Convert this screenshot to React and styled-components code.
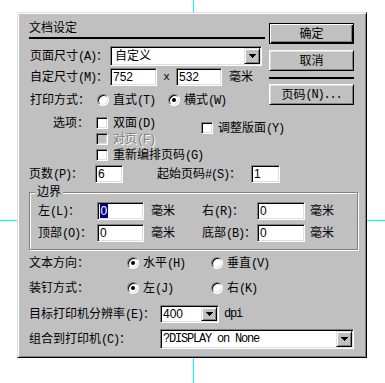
import React from "react";
import styled, { createGlobalStyle } from "styled-components";

const Global = createGlobalStyle`
  html, body { margin: 0; padding: 0; background: #fff; }
  body {
    font-family: "Liberation Sans", "Noto Sans CJK SC", sans-serif;
    font-size: 12px;
    color: #000;
  }
  * { box-sizing: border-box; }
`;

const Page = styled.div`
  position: relative;
  width: 385px;
  height: 383px;
  overflow: hidden;
  padding: 12px 0 0 17px;
`;

const GuideV = styled.div`
  position: absolute;
  left: 193px;
  top: 0;
  bottom: 0;
  width: 1px;
  background: #00ffff;
`;

const GuideH = styled.div`
  position: absolute;
  top: 220px;
  left: 0;
  right: 0;
  height: 1px;
  background: #00ffff;
`;

const Dialog = styled.div`
  position: relative;
  width: 350px;
  height: 346px;
  background: #c0c0c0;
  border: 1px solid;
  border-color: #dfdfdf #000 #000 #dfdfdf;
  box-shadow: inset 1px 1px #fff, inset -1px -1px #808080;
  padding: 8px 12px 0 11px;
  display: flex;
  flex-direction: column;
`;

const Top = styled.div`
  display: flex;
  gap: 4px;
`;

const LeftCol = styled.div`
  width: 236px;
  display: flex;
  flex-direction: column;
`;

const RightCol = styled.div`
  width: 85px;
  display: flex;
  flex-direction: column;
  padding-top: 2px;
`;

const Title = styled.div`
  line-height: 14px;
  padding: 0 0 2px;
  border-bottom: 2px solid #000;
`;

const Row = styled.div`
  display: flex;
  align-items: center;
  height: ${(p) => p.$h || 18}px;
  margin-top: ${(p) => p.$mt || 0}px;
  white-space: nowrap;
`;

const Label = styled.div`
  flex-shrink: 0;
  width: ${(p) => p.$w}px;
  padding-left: ${(p) => p.$pl || 0}px;
  margin-left: ${(p) => p.$ml || 0}px;
  line-height: 14px;
  white-space: nowrap;
`;

/* accelerator / ascii part, rendered in a narrow monospace like the bitmap font */
const Key = styled.span`
  font-family: "Liberation Mono", monospace;
  font-size: 12px;
  letter-spacing: -1.2px;
`;

const Unit = styled.div`
  flex-shrink: 0;
  width: ${(p) => (p.$w ? `${p.$w}px` : "auto")};
  padding-left: ${(p) => p.$pl || 0}px;
  line-height: 14px;
`;

const MonoUnit = styled.div`
  margin-left: 5px;
  font-family: "Liberation Mono", monospace;
  font-size: 12px;
  letter-spacing: -1.2px;
`;

const Times = styled.div`
  width: 19px;
  text-align: center;
  font-family: "Liberation Mono", monospace;
  font-size: 11px;
  line-height: 14px;
`;

const sunken = `
  border: 1px solid;
  border-color: #808080 #fff #fff #808080;
  box-shadow: inset 1px 1px #000, inset -1px -1px #dfdfdf;
`;

const raised = `
  border: 1px solid;
  border-color: #dfdfdf #000 #000 #dfdfdf;
  box-shadow: inset 1px 1px #fff, inset -1px -1px #808080;
`;

const Field = styled.div`
  flex-shrink: 0;
  width: ${(p) => p.$w}px;
  height: ${(p) => p.$h || 18}px;
  background: #fff;
  ${sunken}
  padding-left: 2px;
  display: flex;
  align-items: center;
  font-family: "Liberation Sans", sans-serif;
  font-size: 12px;
  line-height: 14px;
`;

const Selected = styled.span`
  background: #000080;
  color: #fff;
  line-height: 14px;
  padding: 0 0.5px;
`;

const Combo = styled.div`
  flex-shrink: 0;
  width: ${(p) => p.$w}px;
  height: ${(p) => p.$h}px;
  background: #fff;
  ${sunken}
  padding: 1px;
  display: flex;
  align-items: center;
`;

const ComboText = styled.div`
  flex: 1;
  padding-left: ${(p) => p.$pl ?? 3}px;
  line-height: 14px;
  white-space: nowrap;
  overflow: hidden;
  font-family: ${(p) =>
    p.$mono ? '"Liberation Mono", monospace' : '"Liberation Sans", "Noto Sans CJK SC", sans-serif'};
  font-size: 12px;
  letter-spacing: ${(p) => (p.$mono ? "-1.2px" : "0")};
`;

const DropBtn = styled.div`
  width: 16px;
  align-self: stretch;
  background: #c0c0c0;
  ${raised}
  display: flex;
  align-items: center;
  justify-content: center;
`;

const Arrow = () => (
  <svg width="7" height="4" viewBox="0 0 7 4" shapeRendering="crispEdges">
    <rect x="0" y="0" width="7" height="1" fill="#000" />
    <rect x="1" y="1" width="5" height="1" fill="#000" />
    <rect x="2" y="2" width="3" height="1" fill="#000" />
    <rect x="3" y="3" width="1" height="1" fill="#000" />
  </svg>
);

const Radio = styled.span`
  flex-shrink: 0;
  width: 12px;
  height: 12px;
  border-radius: 50%;
  background: #fff;
  ${sunken}
  display: flex;
  align-items: center;
  justify-content: center;
  &::after {
    content: "";
    width: 4px;
    height: 4px;
    border-radius: 50%;
    background: #000;
    display: ${(p) => (p.$on ? "block" : "none")};
  }
`;

const Choice = styled.div`
  flex-shrink: 0;
  display: flex;
  align-items: center;
  gap: ${(p) => p.$gap || 4}px;
  width: ${(p) => (p.$w ? `${p.$w}px` : "auto")};
  line-height: 14px;
  white-space: nowrap;
  color: ${(p) => (p.$disabled ? "#808080" : "#000")};
  text-shadow: ${(p) => (p.$disabled ? "1px 1px 0 #fff" : "none")};
`;

const Box = styled.span`
  flex-shrink: 0;
  width: 12px;
  height: 12px;
  background: ${(p) => (p.$disabled ? "#c0c0c0" : "#fff")};
  ${sunken}
`;

const Options = styled.div`
  display: grid;
  grid-template-columns: 67px 105px auto;
  grid-template-rows: 16px 16px 16px;
  margin-top: 7px;
`;

const OptLabel = styled.div`
  grid-column: 1;
  grid-row: 1;
  padding-left: 24px;
  line-height: 16px;
`;

const OptCell = styled.div`
  grid-column: ${(p) => p.$col};
  grid-row: ${(p) => p.$row};
  align-self: ${(p) => (p.$top ? "start" : "center")};
  margin-top: ${(p) => p.$mt || 0}px;
  display: flex;
  align-items: center;
  height: 16px;
`;

const Btn = styled.div`
  height: 21px;
  margin-top: ${(p) => p.$mt || 0}px;
  background: #c0c0c0;
  display: flex;
  align-items: center;
  justify-content: center;
  line-height: 14px;
  white-space: nowrap;
  border: 1px solid;
  border-color: ${(p) => (p.$def ? "#000" : "#fff #000 #000 #fff")};
  box-shadow: ${(p) =>
    p.$def
      ? "inset 1px 1px #fff, inset -1px -1px #000, inset -2px -2px #808080"
      : "inset 1px 1px #dfdfdf, inset -1px -1px #808080"};
`;

const Sep = styled.div`
  height: 2px;
  margin-top: 6px;
  background: #000;
`;

const Group = styled.div`
  position: relative;
  width: 329px;
  margin-top: 9px;
  padding: 9px 0 7px 8px;
  border: 1px solid #808080;
  box-shadow: inset 1px 1px #fff, 1px 1px #fff;
  display: flex;
  flex-direction: column;
`;

const Legend = styled.span`
  position: absolute;
  top: -8px;
  left: 5px;
  padding: 0 2px;
  line-height: 14px;
  background: #c0c0c0;
`;

export default function App() {
  return (
    <>
      <Global />
      <Page>
        <GuideV />
        <GuideH />
        <Dialog>
          <Top>
            <LeftCol>
              <Title>文档设定</Title>
              <Row $h={20} $mt={7}>
                <Label $w={81} $pl={1}>
                  页面尺寸<Key>(A)</Key>：
                </Label>
                <Combo $w={152} $h={20}>
                  <ComboText>自定义</ComboText>
                  <DropBtn>
                    <Arrow />
                  </DropBtn>
                </Combo>
              </Row>
              <Row $h={18} $mt={2}>
                <Label $w={81} $pl={1}>
                  自定尺寸<Key>(M)</Key>：
                </Label>
                <Field $w={47}>752</Field>
                <Times>x</Times>
                <Field $w={46}>532</Field>
                <Unit $pl={7}>毫米</Unit>
              </Row>
              <Row $h={16} $mt={6}>
                <Label $w={68} $pl={1}>打印方式：</Label>
                <Choice $w={71}>
                  <Radio />
                  <span>
                    直式<Key>(T)</Key>
                  </span>
                </Choice>
                <Choice>
                  <Radio $on />
                  <span>
                    横式<Key>(W)</Key>
                  </span>
                </Choice>
              </Row>
              <Options>
                <OptLabel>选项：</OptLabel>
                <OptCell $col={2} $row={1}>
                  <Choice $gap={5}>
                    <Box />
                    <span>
                      双面<Key>(D)</Key>
                    </span>
                  </Choice>
                </OptCell>
                <OptCell $col={3} $row="1 / span 2" $top $mt={5}>
                  <Choice $gap={5}>
                    <Box />
                    <span>
                      调整版面<Key>(Y)</Key>
                    </span>
                  </Choice>
                </OptCell>
                <OptCell $col={2} $row={2}>
                  <Choice $gap={5} $disabled>
                    <Box $disabled />
                    <span>
                      对页<Key>(F)</Key>
                    </span>
                  </Choice>
                </OptCell>
                <OptCell $col="2 / span 2" $row={3}>
                  <Choice $gap={5}>
                    <Box />
                    <span>
                      重新编排页码<Key>(G)</Key>
                    </span>
                  </Choice>
                </OptCell>
              </Options>
            </LeftCol>
            <RightCol>
              <Btn $def>确定</Btn>
              <Btn $mt={6}>取消</Btn>
              <Sep />
              <Btn $mt={5}>
                页码<Key>(N)...</Key>
              </Btn>
            </RightCol>
          </Top>

          <Row $h={18} $mt={2}>
            <Label $w={66}>
              页数<Key>(P)</Key>：
            </Label>
            <Field $w={28}>6</Field>
            <Label $w={94} $ml={34}>
              起始页码<Key>#(S)</Key>：
            </Label>
            <Field $w={29}>1</Field>
          </Row>

          <Group>
            <Legend>边界</Legend>
            <Row $h={18}>
              <Label $w={59}>
                左<Key>(L)</Key>：
              </Label>
              <Field $w={47}>
                <Selected>0</Selected>
              </Field>
              <Unit $w={58} $pl={7}>毫米</Unit>
              <Label $w={55}>
                右<Key>(R)</Key>：
              </Label>
              <Field $w={48}>0</Field>
              <Unit $pl={5}>毫米</Unit>
            </Row>
            <Row $h={18} $mt={4}>
              <Label $w={59}>
                顶部<Key>(O)</Key>：
              </Label>
              <Field $w={47}>0</Field>
              <Unit $w={58} $pl={7}>毫米</Unit>
              <Label $w={55}>
                底部<Key>(B)</Key>：
              </Label>
              <Field $w={48}>0</Field>
              <Unit $pl={5}>毫米</Unit>
            </Row>
          </Group>

          <Row $h={16} $mt={5}>
            <Label $w={98}>文本方向：</Label>
            <Choice $w={84}>
              <Radio $on />
              <span>
                水平<Key>(H)</Key>
              </span>
            </Choice>
            <Choice>
              <Radio />
              <span>
                垂直<Key>(V)</Key>
              </span>
            </Choice>
          </Row>
          <Row $h={16} $mt={9}>
            <Label $w={98}>装钉方式：</Label>
            <Choice $w={84}>
              <Radio $on />
              <span>
                左<Key>(J)</Key>
              </span>
            </Choice>
            <Choice>
              <Radio />
              <span>
                右<Key>(K)</Key>
              </span>
            </Choice>
          </Row>
          <Row $h={18} $mt={9}>
            <Label $w={131}>
              目标打印机分辨率<Key>(E)</Key>：
            </Label>
            <Combo $w={59} $h={18}>
              <ComboText $pl={1}>400</ComboText>
              <DropBtn>
                <Arrow />
              </DropBtn>
            </Combo>
            <MonoUnit>dpi</MonoUnit>
          </Row>
          <Row $h={20} $mt={6}>
            <Label $w={131}>
              组合到打印机<Key>(C)</Key>：
            </Label>
            <Combo $w={194} $h={20}>
              <ComboText $mono $pl={1}>?DISPLAY on None</ComboText>
              <DropBtn>
                <Arrow />
              </DropBtn>
            </Combo>
          </Row>
        </Dialog>
      </Page>
    </>
  );
}
